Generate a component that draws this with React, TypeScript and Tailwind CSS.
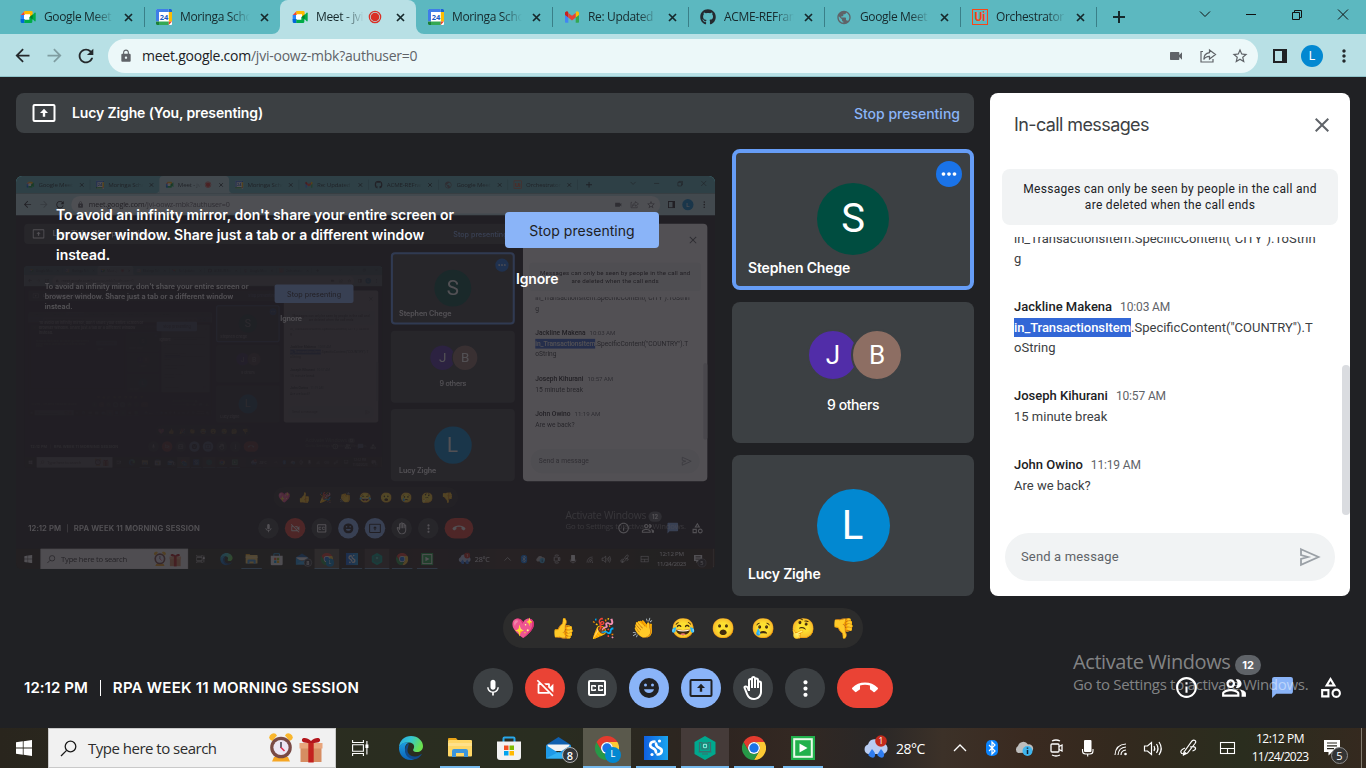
import type { ReactNode } from 'react';
import {
  MdMic, MdOutlineVideocamOff, MdOutlineClosedCaption, MdMoreVert, MdCallEnd, MdOutlineInfo, MdOutlinePeopleAlt,
  MdChatBubble, MdOutlineCategory, MdOutlineBackHand, MdVideocam, MdClose, MdArrowBack, MdArrowForward,
  MdRefresh, MdLock, MdStarBorder, MdMoreHoriz, MdPublic,
} from 'react-icons/md';
import { FaGithub } from 'react-icons/fa';

const segoe = "font-['Open_Sans',sans-serif]";
const google = "font-['Inter',sans-serif]";
const roboto = "font-['Roboto',sans-serif]";

/* ---------- logos ---------- */

function MeetLogo() {
  return (
    <svg width="16" height="16" viewBox="0 0 24 24">
      <path d="M6 4h10.5v16H2.5V8z" fill="#fff" />
      <path d="M1 9h5v8H1z" fill="#2684fc" />
      <path d="M1 9l6-6v6z" fill="#ea4335" />
      <path d="M6.500 3H17a2 2 0 0 1 2 2v5l-4 2.500V8H6.500z" fill="#ffba00" />
      <path d="M1 15h6v6H3a2 2 0 0 1-2-2z" fill="#0066da" />
      <path d="M6.500 16H14v-4l4.500-1V19a2 2 0 0 1-2 2h-10z" fill="#00ac47" />
      <path d="M16 12l6-6.500c.600-.500 1.500 0 1.500.700v11.600c0 .700-.900 1.200-1.500.700z" fill="#00ac47" />
      <path d="M14.500 12l4.500-4v8z" fill="#00832d" />
    </svg>
  );
}

function CalendarLogo() {
  return (
    <svg width="16" height="16" viewBox="0 0 16 16">
      <rect width="16" height="16" rx="1" fill="#fff" />
      <path d="M0 1a1 1 0 0 1 1-1h11.500v3H3v9.500H0z" fill="#3f7de8" />
      <path d="M12.500 0H15a1 1 0 0 1 1 1v2h-3.500z" fill="#1967d2" />
      <path d="M12.800 3H16v9.500h-3.200z" fill="#fbbc04" />
      <path d="M3 12.500h9.800V16H3z" fill="#34a853" />
      <path d="M0 12.500h3V16H1a1 1 0 0 1-1-1z" fill="#188038" />
      <path d="M12.800 12.500H16L12.800 16z" fill="#ea4335" />
      <text x="8" y="10.700" textAnchor="middle" fontSize="7.500" fontWeight="700" fontFamily="Open Sans" fill="#1a5bc4">24</text>
    </svg>
  );
}

function GmailLogo() {
  return (
    <svg width="16" height="16" viewBox="0 0 16 16">
      <path d="M1 4v9a.800.800 0 0 0 .800.800H4.300V7z" fill="#4285f4" />
      <path d="M15 4v9a.800.800 0 0 1-.800.800H11.700V7z" fill="#34a853" />
      <path d="M1 4.500A1.700 1.700 0 0 1 4.300 3.600V8.500L1 6z" fill="#c5221f" />
      <path d="M15 4.500a1.700 1.700 0 0 0-3.300-.900V8.500L15 6z" fill="#fbbc04" />
      <path d="M4.300 3.900L8 6.800l3.700-2.900v4.700L8 11.400 4.300 8.600z" fill="#ea4335" />
    </svg>
  );
}

function UiPathLogo() {
  return (
    <span className="flex size-4 items-center justify-center border-[1.5px] border-[#fa4616] font-['Roboto',sans-serif] text-[12px] leading-none font-bold text-[#fa4616]">
      Ui
    </span>
  );
}

function ChromeLogo() {
  return (
    <svg width="24" height="24" viewBox="0 0 48 48">
      <path d="M24 12H44.800A24 24 0 0 1 24 48L34.400 30A12 12 0 0 0 24 12" fill="#fcc934" />
      <path d="M34.400 30L24 48A24 24 0 0 1 3.200 12L13.600 30A12 12 0 0 0 34.400 30" fill="#279847" />
      <path d="M13.600 30L3.200 12A24 24 0 0 1 44.800 12H24A12 12 0 0 0 13.600 30" fill="#e33b2e" />
      <circle cx="24" cy="24" r="12" fill="#fff" />
      <circle cx="24" cy="24" r="9.400" fill="#1a73e8" />
    </svg>
  );
}

function EdgeLogo() {
  return (
    <svg width="26" height="26" viewBox="0 0 26 26">
      <defs>
        <linearGradient id="edgeTop" x1="0" y1="0" x2="1" y2="0.400">
          <stop offset="0" stopColor="#27a6e6" />
          <stop offset="0.500" stopColor="#35c6cf" />
          <stop offset="1" stopColor="#6ae04f" />
        </linearGradient>
        <linearGradient id="edgeBody" x1="0" y1="0" x2="0" y2="1">
          <stop offset="0" stopColor="#1c9de0" />
          <stop offset="1" stopColor="#0b63b8" />
        </linearGradient>
      </defs>
      <path d="M1 12C1.500 5.500 6.500 1 13 1c7 0 12 5 12 10 0 4-3 6-6 6-3.500 0-4.500-1.500-3.500-3 1.500-2.500.500-6-4-6.500C6.500 7 2.500 9 1 12z" fill="url(#edgeTop)" />
      <path d="M1 12c2-4 6-5 9.500-4.200C7.500 9 6.500 12 7 15c.700 4.500 5 8.500 10 8.500-1.300 1-3 1.500-4.500 1.500C5.500 25 .500 19 1 12z" fill="url(#edgeBody)" />
      <path d="M10 12.500c-2 5 2 9.500 7.500 9 2.500-.200 4.200-1.200 5.500-2.300.400-.300.800.100.500.600C22 22 19.500 24 17 24.300 11 24.800 6.500 20 7 14.500c.300-3 2-5.500 4.500-6.500-1 1-1 2.500-1.500 4.500z" fill="#114a8b" />
    </svg>
  );
}

function ExplorerLogo() {
  return (
    <svg width="24" height="20" viewBox="0 0 24 20">
      <path d="M0 1a1 1 0 0 1 1-1h7l2 2.500H0z" fill="#e8a317" />
      <rect y="2" width="24" height="16.500" rx="1" fill="#ffd766" />
      <path d="M0 5h24v3H0z" fill="#ffe08a" />
      <path d="M4 19v-6a2 2 0 0 1 2-2h12a2 2 0 0 1 2 2v6h-4v-4H8v4z" fill="#3b95dc" />
    </svg>
  );
}

function StoreLogo() {
  return (
    <svg width="24" height="25" viewBox="0 0 24 25">
      <path d="M6.500 6V2.500A1 1 0 0 1 7.500 1.500h9a1 1 0 0 1 1 1V6" fill="none" stroke="#28a8ea" strokeWidth="2" />
      <path d="M0 5.500h24V21a3 3 0 0 1-3 3H3a3 3 0 0 1-3-3z" fill="#f2f2f2" />
      <path d="M7 9.500h4.500V14H7z" fill="#f25022" />
      <path d="M12.500 9.500H17V14h-4.500z" fill="#7fba00" />
      <path d="M7 15h4.500v4.500H7z" fill="#00a4ef" />
      <path d="M12.500 15H17v4.500h-4.500z" fill="#ffb900" />
    </svg>
  );
}

function MailLogo() {
  return (
    <svg width="25" height="24" viewBox="0 0 25 24">
      <path d="M0 9L12.500 1 25 9l-3 5H3z" fill="#0f5fae" />
      <path d="M1.500 8.500h22V15h-22z" fill="#f3f3f3" />
      <path d="M0 9l12.500 8L25 9v13.500H0z" fill="#1f9ae8" />
      <path d="M0 22.500L12.500 16 25 22.500z" fill="#33b2f4" />
    </svg>
  );
}

function SyncLogo() {
  return (
    <svg width="24" height="24" viewBox="0 0 24 24">
      <defs>
        <linearGradient id="sync" x1="0" y1="0" x2="1" y2="0">
          <stop offset="0" stopColor="#0f5fe0" />
          <stop offset="1" stopColor="#1aa5ee" />
        </linearGradient>
      </defs>
      <rect width="24" height="24" fill="url(#sync)" />
      <g fill="none" stroke="#fff" strokeWidth="2.600" strokeLinecap="round">
        <path d="M10.500 5.500C5.500 5.500 5 10.500 8.500 12c2.500 1 3.500 2 3.500 4.500" />
        <path d="M13.500 18.500c5 0 5.500-5 2-6.500-2.500-1-3.500-2-3.500-4.500" />
      </g>
      <circle cx="15.500" cy="5" r="1.600" fill="#fff" />
      <circle cx="8" cy="18.500" r="1.600" fill="#fff" />
    </svg>
  );
}

function HexLogo() {
  return (
    <svg width="22" height="24" viewBox="0 0 22 24">
      <path d="M11 0l10.500 6v12L11 24 .500 18V6z" fill="#00a88e" />
      <g fill="none" stroke="#39706f" strokeWidth="1.200">
        <path d="M8 6.500H5.500v9h11v-9H14M8 18h6M4.500 16h13" />
        <circle cx="11" cy="10" r="1.800" stroke="#8fe3d6" />
        <path d="M8 7h6v6H8z" />
      </g>
    </svg>
  );
}

function PlayLogo() {
  return (
    <svg width="24" height="24" viewBox="0 0 24 24">
      <rect width="24" height="24" fill="#22b14c" />
      <rect x="3.200" y="3.200" width="17.600" height="17.600" fill="none" stroke="#e9fbe9" strokeWidth="2" />
      <path d="M8.500 7.500v9l8-4.500z" fill="#fff" />
    </svg>
  );
}

function AlarmClock() {
  return (
    <svg width="24" height="30" viewBox="0 0 24 30">
      <path d="M1 6.500A4 4 0 0 1 8 2.500L3.500 8z" fill="#f9b62c" />
      <path d="M23 6.500A4 4 0 0 0 16 2.500L20.500 8z" fill="#f9b62c" />
      <path d="M5 24h14l2 4.500H3z" fill="#f6a623" />
      <circle cx="12" cy="14.500" r="10.800" fill="#7a4a45" />
      <circle cx="12" cy="14.500" r="7.600" fill="#ece6f4" />
      <path d="M12 9v6" stroke="#332b3a" strokeWidth="1.400" />
      <path d="M12 14.500l3.500 3.500" stroke="#e0314f" strokeWidth="1.600" />
    </svg>
  );
}

function Gift() {
  return (
    <svg width="24" height="26" viewBox="0 0 24 26">
      <path d="M1.500 10h21v15h-21z" fill="#d68d62" />
      <path d="M.500 6h23v5.500H.500z" fill="#e8a57c" />
      <path d="M9.300 5h5.400v20.500H9.300z" fill="#c3211f" />
      <path d="M12 6C8 6 2 6 3 2.500 4 0 9 1 12 4c3-3 8-4 9-1.500C22 6 16 6 12 6z" fill="#b3161c" />
    </svg>
  );
}

function PresentIcon({ className }: { className: string }) {
  return (
    <svg width="24" height="20" viewBox="0 0 24 20" className={className}>
      <rect x="1.500" y="2" width="21" height="16" rx="1" fill="none" stroke="currentColor" strokeWidth="2" />
      <path d="M12 5.800l4 4.200h-2.800v3.800h-2.400V10H8z" fill="currentColor" />
    </svg>
  );
}

/* ---------- browser chrome ---------- */

type Tab = { title: string; icon: ReactNode; active?: boolean; divider?: boolean };

const tabs: Tab[] = [
  { title: 'Google Meet', icon: <MeetLogo />, divider: true },
  { title: 'Moringa Scho', icon: <CalendarLogo /> },
  { title: 'Meet - jvi', icon: <MeetLogo />, active: true },
  { title: 'Moringa Scho', icon: <CalendarLogo />, divider: true },
  { title: 'Re: Updated', icon: <GmailLogo />, divider: true },
  { title: 'ACME-REFram', icon: <FaGithub size={16} color="#24292f" />, divider: true },
  { title: 'Google Meet', icon: <MdPublic size={17} color="#5f6368" />, divider: true },
  { title: 'Orchestrator', icon: <UiPathLogo />, divider: true },
];

function TabStrip() {
  return (
    <div className={`flex h-[34px] items-stretch bg-[#5cb8c0] pl-2 text-[#16292c] ${segoe}`}>
      {tabs.map((t, i) => (
        <div
          key={i}
          className={`relative flex w-[136px] items-center pl-3 ${t.active ? 'rounded-t-lg bg-[#b8e0e5]' : ''}`}
        >
          {t.active && (
            <>
              <svg width="8" height="8" className="absolute bottom-0 -left-2" viewBox="0 0 8 8"><path d="M8 0v8H0a8 8 0 0 0 8-8" fill="#b8e0e5" /></svg>
              <svg width="8" height="8" className="absolute -right-2 bottom-0" viewBox="0 0 8 8"><path d="M0 0v8h8a8 8 0 0 1-8-8" fill="#b8e0e5" /></svg>
            </>
          )}
          <span className="flex size-4 shrink-0 items-center justify-center">{t.icon}</span>
          <span
            className={`ml-2 overflow-hidden text-[12px] tracking-[-0.35px] whitespace-nowrap [mask-image:linear-gradient(to_right,black_calc(100%-20px),transparent)] ${t.active ? 'w-[48px]' : 'w-[70px]'}`}
          >
            {t.title}
          </span>
          {t.active && (
            <svg width="14" height="14" viewBox="0 0 14 14" className="ml-1">
              <circle cx="7" cy="7" r="5.700" fill="none" stroke="#d93025" strokeWidth="1.200" />
              <circle cx="7" cy="7" r="4.300" fill="#d93025" />
            </svg>
          )}
          <svg width="13" height="13" viewBox="0 0 13 13" className={t.active ? 'ml-[12px]' : 'ml-[8px]'}>
            <path d="M3 3l7 7M10 3l-7 7" stroke="currentColor" strokeWidth="1.700" />
          </svg>
          {t.divider && <span className="absolute top-[7px] -right-px h-5 w-px bg-[#3a7f88]" />}
        </div>
      ))}
      <span className="flex w-[45px] items-center justify-center">
        <svg width="12" height="12" viewBox="0 0 12 12"><path d="M6 0v12M0 6h12" stroke="currentColor" strokeWidth="2" /></svg>
      </span>
      <svg width="160" height="34" viewBox="0 0 160 34" className="ml-auto overflow-visible" fill="none" stroke="#111" strokeWidth="1">
        <path d="M-6 11.500L-1 16.500l5-5" />
        <path d="M40 14.500h10" />
        <path d="M86.500 12.500h7v7h-7zM88.500 12.500v-2h7v7h-2" />
        <path d="M132 9.500l10 10M142 9.500l-10 10" />
      </svg>
    </div>
  );
}

function Toolbar() {
  return (
    <div className={`flex h-[43px] items-center border-b border-[#8fc3c9] bg-[#b8e0e5] pt-px pl-3 text-[#24292c] ${segoe}`}>
      <MdArrowBack size={21} />
      <MdArrowForward size={21} className="ml-[11px] text-[#7f9da1]" />
      <MdRefresh size={22} className="ml-[10px]" />
      <div className="ml-[11px] flex h-[34px] w-[1150px] shrink-0 items-center rounded-full bg-[#ecf8f9] pl-[11px] text-[#5f6368]">
        <MdLock size={14} />
        <span className="ml-[9px] text-[14px] tracking-[-0.24px]"><span className="text-[#202124]">meet.google.com</span>/jvi-oowz-mbk?authuser=0</span>
        <MdVideocam size={16} className="ml-auto" />
        <svg width="18" height="18" viewBox="0 0 18 18" className="ml-[15px]" fill="none" stroke="currentColor" strokeWidth="1.200">
          <path d="M4 4.500H2v10.500h12V12" />
          <path d="M10.500 3l6 4.500-6 4.500V9.300C7.500 9.300 6 10.200 4.800 12.500c0-4 2-6.300 5.700-6.800z" />
        </svg>
        <MdStarBorder size={18} className="mr-[9px] ml-[14px]" />
      </div>
      <svg width="14" height="14" viewBox="0 0 14 14" className="ml-[15px]">
        <path d="M1 1h12v12H1z" fill="none" stroke="#202124" strokeWidth="2" />
        <path d="M9 1h4v12H9z" fill="#202124" />
      </svg>
      <span className="ml-[14px] flex size-[22px] items-center justify-center rounded-full bg-[#0288d1] font-['Roboto',sans-serif] text-[12px] text-white">L</span>
      <MdMoreVert size={20} className="ml-[11px]" />
    </div>
  );
}

/* ---------- meeting ---------- */

function Avatar({ letter, className }: { letter: string; className: string }) {
  return <span className={`flex items-center justify-center rounded-full text-white ${roboto} ${className}`}>{letter}</span>;
}

function Tiles() {
  return (
    <div className={`flex w-[242px] shrink-0 flex-col gap-3 text-[14px] font-semibold text-white ${google}`}>
      <div className="relative flex h-[141px] justify-center rounded-lg border-4 border-[#669df6] bg-[#3c4043] pt-[30px]">
        <Avatar letter="S" className="size-[72px] bg-[#004d40] text-[40px] font-normal" />
        <span className="absolute top-2 right-2 flex size-[26px] items-center justify-center rounded-full bg-[#1a73e8]"><MdMoreHoriz size={22} /></span>
        <span className="absolute bottom-2 left-3 tracking-[-0.15px]">Stephen Chege</span>
      </div>
      <div className="flex h-[141px] flex-col items-center rounded-lg bg-[#3c4043] pt-[27px]">
        <div className="flex pl-1">
          <Avatar letter="J" className="size-[52px] border-2 border-[#3c4043] bg-[#512da8] text-[26px] font-normal" />
          <Avatar letter="B" className="-ml-2 size-[52px] border-2 border-[#3c4043] bg-[#8d6e63] text-[26px] font-normal" />
        </div>
        <span className="mt-[13px] font-medium tracking-[-0.4px]">9 others</span>
      </div>
      <div className="relative flex h-[141px] justify-center rounded-lg bg-[#3c4043] pt-[34px]">
        <Avatar letter="L" className="size-[73px] bg-[#0288d1] pr-px text-[40px] font-normal" />
        <span className="absolute bottom-3 left-4 tracking-[-0.2px]">Lucy Zighe</span>
      </div>
    </div>
  );
}

function Mirror({ depth }: { depth: number }) {
  return (
    <div className="relative h-[393px] w-[699px] shrink-0 overflow-hidden rounded-md bg-[#202124]">
      {depth > 0 && (
        <div className="absolute top-0 left-0 origin-top-left scale-[0.5121]">
          <Desktop depth={depth - 1} />
        </div>
      )}
      <div className={`absolute inset-0 flex items-start bg-[#211f24]/[0.78] pt-[29px] pl-10 text-[14px] text-white ${google}`}>
        <p className="w-[430px] leading-5 font-semibold tracking-[-0.03px]">
          To avoid an infinity mirror, don't share your entire screen or<br />browser window. Share just a tab or a different window<br />instead.
        </p>
        <div className="ml-[19px] flex w-[154px] flex-col pt-[7px]">
          <span className="flex h-9 items-center justify-center rounded bg-[#8ab4f8] font-normal tracking-[0.05px] text-[#202124]">Stop presenting</span>
          <span className="mt-5 ml-[11px] font-semibold tracking-[-0.15px]">Ignore</span>
        </div>
      </div>
    </div>
  );
}

const messages = [
  { name: 'Jackline Makena', time: '10:03 AM', mark: 'in_TransactionsItem', text: '.SpecificContent("COUNTRY").T\noString' },
  { name: 'Joseph Kihurani', time: '10:57 AM', text: '15 minute break' },
  { name: 'John Owino', time: '11:19 AM', text: 'Are we back?' },
];

function ChatPanel() {
  return (
    <aside className={`relative flex w-[360px] shrink-0 flex-col rounded-lg bg-white text-[#3c4043] ${roboto}`}>
      <div className="flex h-[76px] items-start justify-between pt-[19px] pr-4 pl-6">
        <h2 className={`text-[18px] leading-[26px] font-normal tracking-[-0.6px] ${google}`}>In-call messages</h2>
        <MdClose size={24} className="mt-px text-[#5f6368]" />
      </div>
      <p className="mx-3 rounded-lg bg-[#f1f3f4] py-3 text-center text-[12px] leading-4 tracking-[0.3px] text-[#202124]">
        Messages can only be seen by people in the call and<br />are deleted when the call ends
      </p>
      <div className="mt-3 h-[287px] overflow-hidden pl-6 text-[13px] leading-5">
        <p className="-mt-2 whitespace-pre">{'in_TransactionsItem.SpecificContent("CITY").ToStrin\ng'}</p>
        {messages.map((m) => (
          <div key={m.name} className="pt-[27px]">
            <div className="flex h-[22px] items-center pb-px">
              <span className="font-medium text-[#202124]">{m.name}</span>
              <span className="ml-2 text-[12px] tracking-[-0.15px] text-[#5f6368]">{m.time}</span>
            </div>
            <p className="whitespace-pre">
              {m.mark && <span className="bg-[#3367d6] py-0.5 font-medium tracking-[-0.06px] text-white">{m.mark}</span>}
              {m.text}
            </p>
          </div>
        ))}
      </div>
      <div className="mx-[15px] mt-[9px] flex h-12 items-center justify-between rounded-full bg-[#f1f3f4] pr-3.5 pl-4 text-[13px] tracking-[0.15px] text-[#5f6368]">
        Send a message
        <svg width="22" height="20" viewBox="0 0 22 20" fill="none" stroke="#9aa0a6" strokeWidth="1.800">
          <path d="M2 2.200L19.500 10 2 17.800V12l7-2-7-2z" />
        </svg>
      </div>
      <span className="absolute top-[272px] right-0 h-[150px] w-2 rounded bg-[#dadce0]" />
    </aside>
  );
}

const reactions = ['💖', '👍', '🎉', '👏', '😂', '😮', '😢', '🤔', '👎'];

function Smiley() {
  return (
    <svg width="20" height="20" viewBox="0 0 20 20">
      <circle cx="10" cy="10" r="10" fill="#202124" />
      <circle cx="6.500" cy="7" r="1.500" fill="#8ab4f8" />
      <circle cx="13.500" cy="7" r="1.500" fill="#8ab4f8" />
      <path d="M5 11.200h10a5.200 5.200 0 0 1-10 0" fill="#8ab4f8" />
    </svg>
  );
}

const round = 'flex size-10 items-center justify-center rounded-full';

function Controls() {
  return (
    <div className={`grid h-20 grid-cols-[473px_420px_1fr] items-center text-white ${google}`}>
      <div className="flex items-center pl-6 text-[15px] font-semibold">
        <span className="tracking-[0.05px]">12:12 PM</span>
        <span className="mx-3 h-4 w-px bg-white" />
        <span className="tracking-[0.24px]">RPA WEEK 11 MORNING SESSION</span>
      </div>
      <div className="flex gap-3">
        <span className={`${round} bg-[#3c4043]`}><MdMic size={20} /></span>
        <span className={`${round} bg-[#ea4335]`}><MdOutlineVideocamOff size={21} /></span>
        <span className={`${round} bg-[#3c4043]`}><MdOutlineClosedCaption size={24} /></span>
        <span className={`${round} bg-[#8ab4f8]`}><Smiley /></span>
        <span className={`${round} bg-[#8ab4f8]`}><PresentIcon className="text-[#202124]" /></span>
        <span className={`${round} bg-[#3c4043]`}><MdOutlineBackHand size={24} /></span>
        <span className={`${round} bg-[#3c4043]`}><MdMoreVert size={25} /></span>
        <span className="flex h-10 w-14 items-center justify-center rounded-full bg-[#ea4335]"><MdCallEnd size={26} /></span>
      </div>
      <div className="relative flex justify-end pr-3">
        <span className="flex w-12 justify-center"><MdOutlineInfo size={25} /></span>
        <span className="flex w-12 justify-center"><MdOutlinePeopleAlt size={26} /></span>
        <span className="flex w-12 justify-center"><MdChatBubble size={25} className="text-[#8ab4f8]" /></span>
        <span className="flex w-12 justify-center"><MdOutlineCategory size={25} /></span>
        <span className="absolute -top-5 left-[342px] flex h-5 w-[26px] items-center justify-center rounded-full bg-[#5f6368] text-[11px] font-bold">12</span>
        <div className={`absolute top-[-25px] left-[180px] whitespace-nowrap text-white/45 ${segoe}`}>
          <div className="text-[20px] leading-6 tracking-[-0.42px]">Activate Windows</div>
          <div className="text-[15px] leading-5 tracking-[-0.3px]">Go to Settings to activate Windows.</div>
        </div>
      </div>
    </div>
  );
}

function Meeting({ depth }: { depth: number }) {
  return (
    <main className="flex h-[651px] flex-col bg-[#202124] pt-4">
      <div className="flex h-[503px] gap-4 px-4">
        <section className="flex w-[958px] shrink-0 flex-col gap-4">
          <header className={`flex h-10 items-center rounded-lg bg-[#3c4043] pr-3.5 pl-4 text-[14px] font-semibold text-white ${google}`}>
            <PresentIcon className="text-white" />
            <span className="ml-4 pb-0.5 tracking-[-0.13px]">Lucy Zighe (You, presenting)</span>
            <span className="ml-auto font-medium tracking-[0px] text-[#8ab4f8]">Stop presenting</span>
          </header>
          <div className="flex items-center justify-between">
            <Mirror depth={depth} />
            <Tiles />
          </div>
        </section>
        <ChatPanel />
      </div>
      <div className="mt-3 flex h-10 w-[360px] self-center rounded-full bg-[#2c2c2c] pl-px">
        {reactions.map((r) => (
          <span key={r} className="flex w-10 items-center justify-center text-[19.5px] leading-none">{r}</span>
        ))}
      </div>
      <Controls />
    </main>
  );
}

/* ---------- taskbar ---------- */

function TaskButton({ children, active, open }: { children: ReactNode; active?: string; open?: boolean }) {
  return (
    <span className={`relative flex h-10 w-12 items-center justify-center ${active ?? ''}`}>
      {children}
      {open && <span className={`absolute bottom-0 h-0.5 bg-[#76b9ed] ${active ? 'inset-x-0' : 'inset-x-1'}`} />}
    </span>
  );
}

function TrayIcons() {
  return (
    <svg width="310" height="40" viewBox="940 0 310 40" fill="none" stroke="#fff" strokeWidth="1.300" className="shrink-0">
      <path d="M955 23l6-6 6 6" />
      <rect x="987" y="12" width="12" height="16" rx="5" fill="#0a84ff" stroke="none" />
      <path d="M990 17l6 6-3 3V14l3 3-6 6" strokeWidth="1.200" />
      <path d="M1019 25a4 4 0 0 1 0-7 5.500 5.500 0 0 1 10-1.500 4 4 0 0 1 2 8z" fill="#bdbdbd" stroke="none" />
      <circle cx="1028.500" cy="23" r="5" fill="#3fb5ee" stroke="none" />
      <path d="M1028.500 22v4M1028.500 19.500v1.300" stroke="#123" strokeWidth="1.500" />
      <rect x="1052" y="16" width="8" height="8" rx="1" />
      <path d="M1060 18.500l3-1.500v6l-3-1.500M1053 13q4-2 8 0M1053 27q4 2 8 0" />
      <rect x="1085" y="12" width="7.500" height="12" rx="1" fill="#fff" stroke="none" />
      <path d="M1083.500 21v2q0 3 3 3h4.500q3 0 3-3v-2M1088.700 26v2.500" strokeWidth="1.100" />
      <circle cx="1126.500" cy="26" r="1.300" fill="#fff" stroke="none" />
      <path d="M1122 27q0-4.500 5-5M1119 27q.500-7.500 8-8M1116 27q.500-10.500 11-11" strokeWidth="1.100" />
      <path d="M1145.500 18v5h3l4 3.500v-12l-4 3.500zM1155 18q1.500 2.500 0 5M1157.500 16q3 4.500 0 9M1160 14q4.500 6.500 0 13" strokeWidth="1.200" />
      <path d="M1185 24l8-11q1.500-1.500 3-.500t0 3l-7.500 9.500-4 2zM1191 19q5-1 5.500 1t-3 3M1186 20q-5 2-4 4.500t5 0" strokeWidth="1.200" />
      <rect x="1221.500" y="14.500" width="14" height="11" strokeWidth="1.100" />
      <path d="M1221.500 20.500h14M1228.500 20.500v5" strokeWidth="1.100" />
    </svg>
  );
}

function Taskbar() {
  return (
    <footer className={`flex h-10 items-stretch bg-[linear-gradient(90deg,#29251d_0%,#2b2d20_20%,#292d20_40%,#2d2420_52%,#332822_58%,#292727_64%,#3c3128_69%,#3a2a20_75%,#33291e_82%,#2a2d1e_91%,#35291f_100%)] text-white ${segoe}`}>
      <span className="flex w-12 items-center justify-center">
        <svg width="16" height="16" viewBox="0 0 16 16" fill="#fff">
          <path d="M0 2.300L6.800 1.300V7.600H0zM7.600 1.200L16 0V7.600H7.600zM0 8.400H6.800V14.700L0 13.700zM7.600 8.400H16V16L7.600 14.800z" />
        </svg>
      </span>
      <div className="flex w-[288px] items-center border border-[#c9c9c9] bg-[#f1f1f1] pl-[11px] text-[#2d2d2d]">
        <svg width="17" height="17" viewBox="0 0 17 17" fill="none" stroke="#1b1b1b" strokeWidth="1.300"><circle cx="10.500" cy="6.500" r="5.300" /><path d="M6.600 10.400L1 16" /></svg>
        <span className="ml-[11px] text-[15px] tracking-[-0.5px]">Type here to search</span>
        <span className="mr-1.5 ml-auto"><AlarmClock /></span>
        <span className="mr-3 pt-1"><Gift /></span>
      </div>
      <span className="flex w-12 items-center justify-center">
        <svg width="17" height="16" viewBox="0 0 17 16" fill="none" stroke="#fff" strokeWidth="1.100">
          <path d="M.600 0v2.500h10.800V0M.600 16v-2.500h10.800V16M.600 4.800h10.800v6.400H.600zM14.900 1v13.500" />
          <path d="M13.400 4.500h3v3.500h-3z" fill="#fff" stroke="none" />
        </svg>
      </span>
      <div className="ml-[3px] flex gap-[1px]">
        <TaskButton><EdgeLogo /></TaskButton>
        <TaskButton open><ExplorerLogo /></TaskButton>
        <TaskButton><StoreLogo /></TaskButton>
        <TaskButton>
          <MailLogo />
          <span className="absolute top-[19px] left-[28px] flex size-4 items-center justify-center rounded-full border border-[#b0b0b0] bg-[#33363a] text-[11px] leading-none font-semibold">8</span>
        </TaskButton>
        <TaskButton active="bg-[#5a594c]" open>
          <ChromeLogo />
          <span className="absolute top-[19px] left-[22px] flex size-4 items-center justify-center rounded-full bg-[#0288d1] font-['Roboto',sans-serif] text-[9px]">L</span>
        </TaskButton>
        <TaskButton open><SyncLogo /></TaskButton>
        <TaskButton active="bg-[#453b39]" open><HexLogo /></TaskButton>
        <TaskButton open><ChromeLogo /></TaskButton>
        <TaskButton open><PlayLogo /></TaskButton>
      </div>
      <div className="ml-auto flex items-center">
        <svg width="26" height="26" viewBox="0 0 26 26" className="shrink-0">
          <path d="M5 19a5 5 0 0 1 0-9.500A7 7 0 0 1 18 8a5.500 5.500 0 0 1 2 11z" fill="#b9cdf2" />
          <path d="M9 14q4 4 3 7t-4.500 1T6 18.500zM18 14q4 4 3 7t-4.500 1T15 18.500z" fill="#2f7df0" />
          <circle cx="18" cy="6" r="5.800" fill="#c42b1c" />
          <text x="18" y="9" textAnchor="middle" fontSize="8.500" fontFamily="Open Sans" fill="#fff">1</text>
        </svg>
        <span className="ml-[7px] w-[43px] text-[14px] tracking-[-0.5px]">28°C</span>
        <TrayIcons />
        <div className="w-[62px] text-center text-[12px] leading-[18px]">
          <div className="tracking-[-0.45px]">12:12 PM</div>
          <div className="tracking-[-0.7px]">11/24/2023</div>
        </div>
        <span className="relative ml-[13px] flex w-[37px] shrink-0">
          <svg width="17" height="17" viewBox="0 0 17 17">
            <path d="M0 0h16v12H8l-3.500 3.500V12H0z" fill="#fff" />
            <path d="M3 3h10M3 5.800h10M3 8.600h7" stroke="#2b2820" strokeWidth="1.200" />
          </svg>
          <span className="absolute top-[7px] left-[7px] flex size-[17px] items-center justify-center rounded-full border border-[#8d8d8d] bg-[#343434] text-[11px] leading-none">5</span>
        </span>
        <span className="mr-1 h-10 w-px bg-[#837c70]" />
      </div>
    </footer>
  );
}

function Desktop({ depth }: { depth: number }) {
  return (
    <div className="h-[768px] w-[1366px] overflow-hidden">
      <TabStrip />
      <Toolbar />
      <Meeting depth={depth} />
      <Taskbar />
    </div>
  );
}

export default function App() {
  return <Desktop depth={3} />;
}
